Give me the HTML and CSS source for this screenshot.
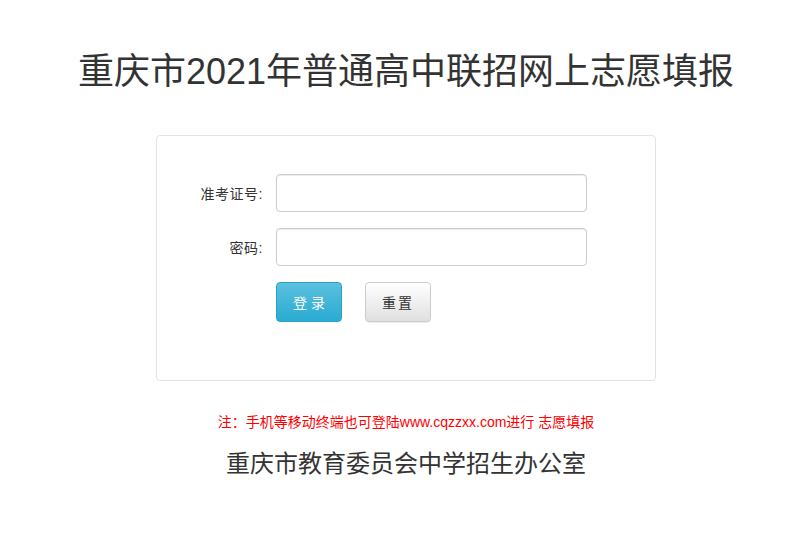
FILE: index.html
```html
<!DOCTYPE html>
<html lang="zh-CN">
<head>
    <meta charset="UTF-8">
    <meta name="viewport" content="width=device-width, initial-scale=1.0">
    <title>重庆市2021年普通高中联招网上志愿填报</title>
    <link rel="stylesheet" href="styles.css">
</head>
<body>
    <h1 class="page-title">重庆市2021年普通高中联招网上志愿填报</h1>

    <div class="login-panel">
        <div class="form-row">
            <label for="zkzh">准考证号:</label>
            <input type="text" id="zkzh" class="form-input">
        </div>
        <div class="form-row">
            <label for="pwd">密码:</label>
            <input type="password" id="pwd" class="form-input">
        </div>
        <div class="form-row">
            <span class="label-spacer"></span>
            <div class="btn-group">
                <button class="btn btn-login">登 录</button>
                <button class="btn btn-reset">重置</button>
            </div>
        </div>
    </div>

    <!-- Mobile notice -->
    <p class="notice">注：手机等移动终端也可登陆www.cqzzxx.com进行 志愿填报</p>
    <p class="footer">重庆市教育委员会中学招生办公室</p>
</body>
</html>
```

FILE: styles.css
```css
/* General Styles */
body {
    font-family: "Liberation Sans", "Noto Sans CJK SC", sans-serif;
    margin: 0;
    padding: 0;
    background-color: #fff;
    color: #333;
}

.page-title {
    font-size: 36px;
    font-weight: normal;
    line-height: 44px;
    text-align: center;
    margin: 50px 0 41px;
    color: #333;
}

.login-panel {
    width: 498px;
    margin: 0 auto;
    padding: 38px 0 58px;
    border: 1px solid #e3e3e3;
    border-radius: 4px;
    background: #fff;
}

.form-row {
    display: flex;
    align-items: center;
    margin-bottom: 16px;
}

.form-row:last-child {
    margin-bottom: 0;
}

.form-row label,
.label-spacer {
    width: 106px;
    margin-right: 13px;
    text-align: right;
    font-size: 14px;
    letter-spacing: 0.5px;
    color: #333;
}

.form-input {
    width: 311px;
    height: 38px;
    box-sizing: border-box;
    padding: 6px 12px;
    border: 1px solid #ccc;
    border-radius: 4px;
    box-shadow: inset 0 1px 1px rgba(0, 0, 0, 0.075);
}

.btn-group {
    display: flex;
    gap: 23px;
}

.btn {
    width: 66px;
    height: 40px;
    font-family: inherit;
    font-size: 14px;
    border-radius: 4px;
    cursor: pointer;
}

.btn-login {
    color: #fff;
    background: linear-gradient(to bottom, #5bc0de 0%, #2aabd2 100%);
    border: 1px solid #28a4c9;
}

.btn-reset {
    color: #333;
    letter-spacing: 2px;
    background: linear-gradient(to bottom, #fff 0%, #e0e0e0 100%);
    border: 1px solid #ccc;
    box-shadow: 0 1px 1px rgba(0, 0, 0, 0.075);
}

.notice {
    margin: 32px 0 0;
    text-align: center;
    font-size: 14px;
    line-height: 18px;
    color: #f00;
}

.footer {
    margin: 18px 0 0;
    text-align: center;
    font-size: 24px;
    line-height: 30px;
    color: #333;
}
```
